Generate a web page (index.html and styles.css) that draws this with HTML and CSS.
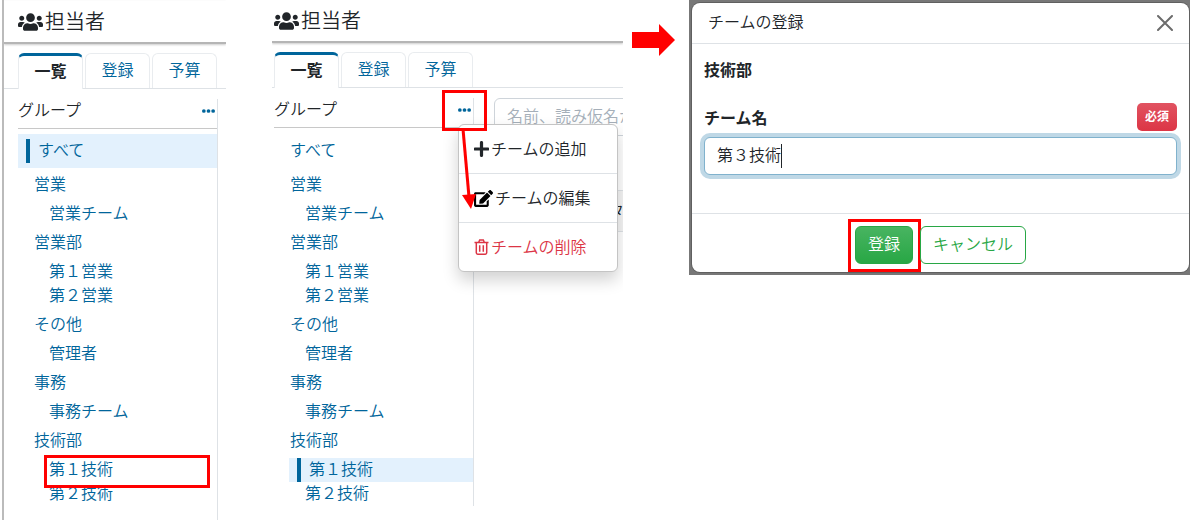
FILE: index.html
```
<!DOCTYPE html>
<html lang="ja">
<head>
<meta charset="utf-8">
<title>担当者</title>
<link rel="stylesheet" href="styles.css">
</head>
<body>

<svg class="sprite" aria-hidden="true">
  <symbol id="users" viewBox="0 0 640 512"><path d="M96 224c35.3 0 64-28.7 64-64s-28.7-64-64-64-64 28.7-64 64 28.7 64 64 64zm448 0c35.3 0 64-28.7 64-64s-28.7-64-64-64-64 28.7-64 64 28.7 64 64 64zm32 32h-64c-17.6 0-33.5 7.1-45.1 18.6 40.3 22.1 68.9 62 75.1 109.4h66c17.7 0 32-14.3 32-32v-32c0-35.3-28.7-64-64-64zm-256 0c61.9 0 112-50.1 112-112S381.9 32 320 32 208 82.1 208 144s50.1 112 112 112zm76.8 32h-8.3c-20.8 10-43.9 16-68.5 16s-47.6-6-68.5-16h-8.3C179.6 288 128 339.6 128 403.2V432c0 26.5 21.5 48 48 48h288c26.5 0 48-21.5 48-48v-28.8c0-63.6-51.6-115.2-115.2-115.2zm-223.7-13.4C161.5 263.1 145.6 256 128 256H64c-35.3 0-64 28.7-64 64v32c0 17.7 14.3 32 32 32h65.9c6.3-47.4 34.9-87.3 75.2-109.4z"/></symbol>
  <symbol id="dots" viewBox="0 0 14 6"><circle cx="2" cy="3" r="2"/><circle cx="7" cy="3" r="2"/><circle cx="12" cy="3" r="2"/></symbol>
</svg>

<div class="steps">

  <section class="panel first">
    <header class="title"><svg class="users"><use href="#users"/></svg><h1>担当者</h1></header>
    <nav class="tabs">
      <a href="#" class="tab active">一覧</a>
      <a href="#" class="tab">登録</a>
      <a href="#" class="tab">予算</a>
    </nav>
    <div class="body">
      <div class="side">
        <div class="side-head">
          <h2>グループ</h2>
          <button type="button" class="more" aria-label="メニュー"><svg><use href="#dots"/></svg></button>
        </div>
        <ul class="tree">
          <li class="all"><a href="#" class="selected">すべて</a></li>
          <li><a href="#">営業</a>
            <ul><li><a href="#">営業チーム</a></li></ul>
          </li>
          <li><a href="#">営業部</a>
            <ul><li><a href="#">第１営業</a></li><li><a href="#">第２営業</a></li></ul>
          </li>
          <li><a href="#">その他</a>
            <ul><li><a href="#">管理者</a></li></ul>
          </li>
          <li><a href="#">事務</a>
            <ul><li><a href="#">事務チーム</a></li></ul>
          </li>
          <li><a href="#">技術部</a>
            <ul><li class="marked"><a href="#">第１技術</a><span class="mark mark-team"></span></li><li><a href="#">第２技術</a></li></ul>
          </li>
        </ul>
      </div>
    </div>
  </section>

  <section class="panel second">
    <header class="title"><svg class="users"><use href="#users"/></svg><h1>担当者</h1></header>
    <nav class="tabs">
      <a href="#" class="tab active">一覧</a>
      <a href="#" class="tab">登録</a>
      <a href="#" class="tab">予算</a>
    </nav>
    <div class="body">
      <div class="side">
        <div class="side-head">
          <h2>グループ</h2>
          <button type="button" class="more" aria-label="メニュー"><svg><use href="#dots"/></svg></button>
          <div class="menu">
            <button type="button"><svg class="plus" viewBox="0 0 14 14"><path d="M7 1v12M1 7h12"/></svg>チームの追加</button>
            <button type="button"><svg class="edit" viewBox="0 0 576 512"><path d="M402.6 83.2l90.2 90.2c3.8 3.8 3.8 10 0 13.8L274.4 405.6l-92.8 10.3c-12.4 1.4-22.9-9.1-21.5-21.5l10.3-92.8L388.8 83.2c3.8-3.8 10-3.8 13.8 0zm162-22.9l-48.8-48.8c-15.2-15.2-39.9-15.2-55.2 0l-35.4 35.4c-3.8 3.8-3.8 10 0 13.8l90.2 90.2c3.8 3.8 10 3.8 13.8 0l35.4-35.4c15.2-15.3 15.2-40 0-55.2zM384 346.2V448H64V128h229.8c3.2 0 6.2-1.3 8.5-3.5l40-40c7.6-7.6 2.2-20.5-8.5-20.5H48C21.5 64 0 85.5 0 112v352c0 26.5 21.5 48 48 48h352c26.5 0 48-21.5 48-48V306.2c0-10.7-12.9-16-20.5-8.5l-40 40c-2.2 2.3-3.5 5.3-3.5 8.5z"/></svg>チームの編集</button>
            <button type="button" class="delete"><svg class="trash" viewBox="0 0 14 16"><path d="M0 3.5h14M4.2 3.2L5.2 1h3.6l1 2.2M1.8 3.8v10q0 1.4 1.4 1.4h7.6q1.4 0 1.4-1.4v-10M5.2 6.2v6.6M8.8 6.2v6.6"/></svg>チームの削除</button>
          </div>
          <span class="mark mark-more"></span>
          <svg class="pointer" viewBox="0 0 20 82"><path d="M5 0L11 68" stroke="#f00" stroke-width="3"/><path d="M4 66l14-1-5 15z" fill="#f00"/></svg>
        </div>
        <ul class="tree">
          <li class="all"><a href="#">すべて</a></li>
          <li><a href="#">営業</a>
            <ul><li><a href="#">営業チーム</a></li></ul>
          </li>
          <li><a href="#">営業部</a>
            <ul><li><a href="#">第１営業</a></li><li><a href="#">第２営業</a></li></ul>
          </li>
          <li><a href="#">その他</a>
            <ul><li><a href="#">管理者</a></li></ul>
          </li>
          <li><a href="#">事務</a>
            <ul><li><a href="#">事務チーム</a></li></ul>
          </li>
          <li><a href="#">技術部</a>
            <ul><li><a href="#" class="selected">第１技術</a></li><li><a href="#">第２技術</a></li></ul>
          </li>
        </ul>
      </div>
      <div class="list">
        <input type="text" class="search" aria-label="検索" placeholder="名前、読み仮名か">
        <div class="list-head">タ</div>
      </div>
    </div>
  </section>

  <svg class="next" viewBox="0 0 44 32"><path d="M0 8h27V0l16 16-16 16v-8H0z"/></svg>

  <section class="backdrop">
    <form class="modal">
      <header class="modal-head">
        <h2>チームの登録</h2>
        <button type="button" class="close" aria-label="閉じる"><svg viewBox="0 0 16 16"><path d="M1 1l14 14M15 1L1 15"/></svg></button>
      </header>
      <div class="modal-body">
        <p class="group">技術部</p>
        <div class="label-row">
          <label for="team">チーム名</label>
          <span class="badge">必須</span>
        </div>
        <div class="field">
          <input type="text" id="team" value="第３技術">
          <span class="caret"></span>
        </div>
      </div>
      <footer class="modal-foot">
        <button type="submit" class="btn save">登録<span class="mark mark-save"></span></button>
        <button type="button" class="btn cancel">キャンセル</button>
      </footer>
    </form>
  </section>

</div>
</body>
</html>
```

FILE: styles.css
```
* {
  box-sizing: border-box;
}

body {
  margin: 0;
  background: #fff;
  color: #212529;
  font: 350 16px/24px "Noto Sans CJK JP", sans-serif;
}

h1, h2, p, ul {
  margin: 0;
  padding: 0;
  font-size: 16px;
  font-weight: inherit;
}

ul {
  list-style: none;
}

a {
  color: #00659b;
  text-decoration: none;
}

button, input {
  font: inherit;
  color: inherit;
}

.sprite {
  position: absolute;
  width: 0;
  height: 0;
}

.steps {
  display: grid;
  grid-template-columns: 224px minmax(0, 397fr) 66px minmax(0, 501fr);
  align-items: start;
  padding-left: 2px;
}

/* list screens */
.panel {
  overflow: hidden;
}

.first {
  min-height: 100vh;
  padding-top: 1px;
  border-left: 2px solid #bbb;
}

.second {
  margin-left: 46px;
}

.title {
  display: flex;
  align-items: center;
  gap: 2px;
  height: 43px;
  padding-left: 2px;
  border-bottom: 2px solid #b5b5b5;
  box-shadow: 0 1px 2px #ccc;
}

.first .title {
  padding-left: 14px;
}

.title h1 {
  padding-bottom: 2px;
  font-size: 20px;
}

.users {
  width: 25px;
  height: 20px;
  fill: #212529;
}

.tabs {
  display: flex;
  gap: 2px;
  margin-top: 9px;
  padding-left: 2px;
  border-bottom: 1px solid #dee2e6;
}

.first .tabs,
.first .body {
  padding-left: 14px;
}

.tab {
  width: 65px;
  height: 35px;
  padding-top: 3px;
  border: 1px solid #e9ecef;
  border-bottom: 0;
  border-radius: 6px 6px 0 0;
  text-align: center;
}

.tab.active {
  height: 36px;
  margin-bottom: -1px;
  padding-top: 2px;
  border-top: 3px solid #00659b;
  background: #fff;
  color: #212529;
  font-weight: 700;
}

.body {
  display: flex;
  gap: 20px;
  padding: 10px 0 0 2px;
}

.side {
  flex: none;
  width: 200px;
  height: 408px;
  border-right: 1px solid #dee2e6;
}

.first .side {
  height: 421px;
}

.side-head {
  position: relative;
  display: flex;
  align-items: center;
  justify-content: space-between;
  height: 30px;
  padding: 0 2px 10px 0;
  border-bottom: 1px solid #c8c8c8;
}

.more {
  display: flex;
  padding: 5px 0 0;
  border: 0;
  background: none;
}

.more svg {
  width: 13px;
  height: 6px;
  fill: #00659b;
}

.tree {
  padding-top: 6px;
}

.first .tree {
  padding-top: 5px;
}

.tree a {
  display: block;
  height: 24px;
  padding-left: 16px;
  line-height: 20px;
}

.tree .selected {
  padding-left: 8px;
  background: #e3f1fd;
}

.tree .selected::before {
  content: "";
  display: inline-block;
  width: 4px;
  height: 24px;
  margin-right: 8px;
  background: #00659b;
  vertical-align: top;
}

.tree .all a {
  height: 34px;
  padding-top: 5px;
}

.tree > li {
  margin-bottom: 5px;
}

.tree ul {
  margin: 5px 0 0 15px;
}

.list {
  flex: 1;
  min-width: 0;
}

.search {
  width: 240px;
  height: 38px;
  padding: 0 12px 4px;
  border: 1px solid #ced4da;
  border-radius: 6px;
}

.search::placeholder {
  color: #a5afb9;
}

.list-head {
  width: 240px;
  height: 42px;
  margin-top: 54px;
  padding: 7px 0 0 114px;
  border: solid #dee2e6;
  border-width: 1px 0;
  background: #f5f5f5;
}

.menu {
  position: absolute;
  z-index: 1;
  top: 26px;
  left: 184px;
  width: 160px;
  border: 1px solid #c4c4c4;
  border-radius: 6px;
  background: #fff;
  box-shadow: 0 8px 16px rgba(0, 0, 0, .18);
}

.menu button {
  display: flex;
  align-items: center;
  gap: 2px;
  width: 100%;
  height: 49px;
  padding: 0 15px 3px;
  border: 0;
  border-bottom: 1px solid #dee2e6;
  background: none;
  white-space: nowrap;
}

.menu svg {
  flex: none;
  margin-top: 3px;
}

.menu .delete {
  height: 48px;
  border-bottom: 0;
  color: #dc3545;
}

.plus, .trash {
  width: 15px;
  height: 16px;
  fill: none;
  stroke: currentColor;
}

.plus {
  stroke-width: 3;
  stroke-linecap: round;
}

.trash {
  stroke-width: 1.5;
}

.edit {
  width: 19px;
  height: 17px;
}

/* red guides */
.mark {
  position: absolute;
  border: 3px solid #f00;
}

.marked {
  position: relative;
}

.mark-team {
  top: -3px;
  left: 11px;
  width: 166px;
  height: 33px;
}

.mark-more {
  z-index: 2;
  top: -8px;
  left: 168px;
  width: 45px;
  height: 41px;
}

.pointer {
  position: absolute;
  z-index: 2;
  top: 31px;
  left: 184px;
  width: 20px;
  height: 82px;
}

.mark-save {
  top: -8px;
  left: -8px;
  width: 73px;
  height: 53px;
}

.next {
  width: 44px;
  height: 32px;
  margin: 24px 0 0 9px;
  fill: #f00;
}

/* dialog */
.backdrop {
  padding: 3px 1px 3px 3px;
  background: #777;
}

.modal {
  border-radius: 8px;
  background: #fff;
  box-shadow: 0 0 0 1px #606060;
}

.modal-head {
  display: flex;
  align-items: center;
  justify-content: space-between;
  height: 41px;
  padding: 0 16px 4px;
  border-bottom: 1px solid #dee2e6;
}

.close {
  display: flex;
  padding: 3px 0 0;
  border: 0;
  background: none;
}

.close svg {
  width: 16px;
  height: 16px;
  stroke: #6c6c6c;
  stroke-width: 2;
  stroke-linecap: round;
}

.modal-body {
  padding: 13px 12px 38px;
}

.group, .label-row label {
  font-weight: 700;
}

.label-row {
  display: flex;
  align-items: center;
  justify-content: space-between;
  margin: 22px 0 6px;
}

.badge {
  padding: 1px 8px 3px;
  border-radius: 5px;
  background: linear-gradient(#e15361, #dc3545);
  color: #fff;
  font-size: 12px;
  font-weight: 700;
}

.field {
  position: relative;
}

.field input {
  display: block;
  width: 100%;
  height: 38px;
  padding: 0 12px 4px;
  border: 1px solid #80b2cd;
  border-radius: 6px;
  outline: none;
  box-shadow: 0 0 0 4px #bfd8e6;
}

.caret {
  position: absolute;
  top: 7px;
  left: 77px;
  width: 1px;
  height: 24px;
  background: #212529;
}

.modal-foot {
  display: flex;
  justify-content: center;
  gap: 7px;
  padding: 12px 12px 8px;
  border-top: 1px solid #dee2e6;
}

.btn {
  position: relative;
  height: 38px;
  padding: 0 12px 5px;
  border: 1px solid #28a745;
  border-radius: 6px;
}

.save {
  background: linear-gradient(#48b461, #28a745);
  color: #fff;
}

.cancel {
  background: #fff;
  color: #28a745;
}
```
